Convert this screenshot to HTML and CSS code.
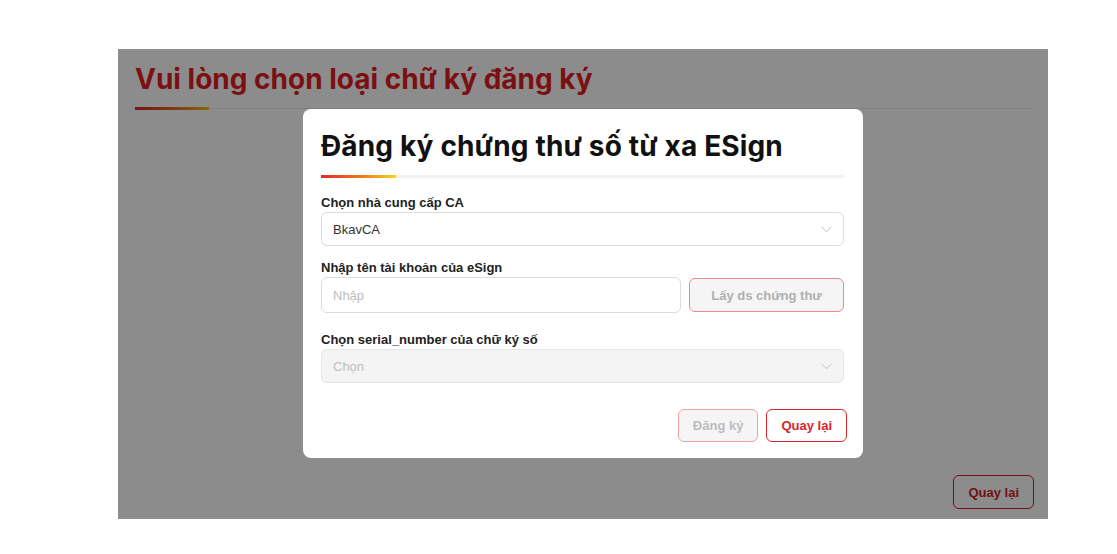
FILE: index.html
```html
<!DOCTYPE html>
<html lang="vi">
<head>
<meta charset="utf-8">
<link rel="stylesheet" href="styles.css">
</head>
<body>
<div class="frame">
  <div class="page">
    <h1 class="page-title">Vui lòng chọn loại chữ ký đăng ký</h1>
    <div class="rule rule-page"><span class="rule-accent"></span></div>
    <div class="page-body"></div>
    <div class="page-footer">
      <button class="btn btn-outline">Quay lại</button>
    </div>
  </div>
  <div class="overlay">
    <div class="modal">
      <h2 class="modal-title">Đăng ký chứng thư số từ xa ESign</h2>
      <div class="rule rule-modal"><span class="rule-accent rule-accent-bright"></span></div>

      <div class="field field-first">
        <label class="label">Chọn nhà cung cấp CA</label>
        <div class="select">
          <span class="select-value">BkavCA</span>
          <svg class="chevron" width="11" height="7" viewBox="0 0 11 7"><path d="M0.5 0.8 L5.5 5.8 L10.5 0.8" fill="none" stroke="#bfbfbf" stroke-width="1"/></svg>
        </div>
      </div>

      <div class="field">
        <label class="label">Nhập tên tài khoản của eSign</label>
        <div class="row">
          <div class="input"><span class="placeholder">Nhập</span></div>
          <button class="btn btn-disabled btn-wide">Lấy ds chứng thư</button>
        </div>
      </div>

      <div class="field field-last">
        <label class="label">Chọn serial_number của chữ ký số</label>
        <div class="select select-disabled">
          <span class="placeholder">Chọn</span>
          <svg class="chevron" width="11" height="7" viewBox="0 0 11 7"><path d="M0.5 0.8 L5.5 5.8 L10.5 0.8" fill="none" stroke="#bfbfbf" stroke-width="1"/></svg>
        </div>
      </div>

      <div class="modal-footer">
        <button class="btn btn-disabled">Đăng ký</button>
        <button class="btn btn-outline btn-bright">Quay lại</button>
      </div>
    </div>
  </div>
</div>
</body>
</html>
```

FILE: styles.css
```css
* { box-sizing: border-box; }

body {
  margin: 0;
  background: #ffffff;
  font-family: "Liberation Sans", Arial, sans-serif;
}

.frame {
  position: relative;
  margin: 49px 0 0 118px;
  width: 930px;
  height: 470px;
  background: #ffffff;
}

.page {
  height: 100%;
  display: flex;
  flex-direction: column;
  padding: 12px 16px 10px 17px;
}

.page-title {
  margin: 0;
  font-family: Inter, "Noto Sans", sans-serif;
  font-weight: 700;
  font-size: 28px;
  line-height: 36px;
  color: #e01e26;
}

.rule {
  height: 3px;
  display: flex;
}

.rule-page {
  margin-top: 10px;
  background: linear-gradient(#ffffff 0 1px, #ececec 1px 2px, #ffffff 2px);
}

.rule-accent {
  width: 74px;
  height: 3px;
  background: linear-gradient(90deg, #d9262b 0%, #e7641f 50%, #f2c511 100%);
}

.page-body { flex: 1; }

.page-footer {
  display: flex;
  justify-content: flex-end;
  margin-right: -2px;
}

.btn {
  height: 34px;
  min-width: 80px;
  padding: 0 14px;
  border-radius: 6px;
  font-family: "Liberation Sans", Arial, sans-serif;
  font-weight: 700;
  font-size: 13px;
  cursor: pointer;
}

.btn-outline {
  background: #ffffff;
  border: 1px solid #cc1f27;
  color: #cc1f27;
}

.btn-bright {
  border-color: #d9262b;
  color: #d9262b;
}

.btn-disabled {
  background: #f5f5f5;
  border: 1px solid #f0a3a5;
  color: #bdbdbd;
}

.overlay {
  position: absolute;
  inset: 0;
  background: rgba(0, 0, 0, 0.45);
  display: flex;
  align-items: center;
  justify-content: center;
}

.modal {
  width: 560px;
  background: #ffffff;
  border-radius: 8px;
  padding: 17px 16px 16px 18px;
  margin-bottom: 1px;
  display: flex;
  flex-direction: column;
}

.modal-title {
  margin: 0;
  font-family: Inter, "Noto Sans", sans-serif;
  font-weight: 700;
  font-size: 28px;
  line-height: 40px;
  color: #111111;
  letter-spacing: 0.15px;
}

.rule-modal {
  margin-top: 9px;
  margin-right: 3px;
  background: #f2f2f2;
}

.rule-accent-bright {
  width: 75px;
  background: linear-gradient(90deg, #e02a26 0%, #ef7a1f 55%, #fbd21a 100%);
}

.field {
  display: flex;
  flex-direction: column;
  margin-right: 3px;
  margin-top: 14px;
}

.field-first { margin-top: 17px; }

.field-last { margin-top: 19px; }

.label {
  font-weight: 700;
  font-size: 13px;
  line-height: 16px;
  color: #222222;
  margin-bottom: 1px;
}

.select,
.input {
  height: 34px;
  border: 1px solid #dcdcdc;
  border-radius: 6px;
  padding: 0 11px;
  display: flex;
  align-items: center;
  justify-content: space-between;
  font-size: 13px;
  color: #333333;
  background: #ffffff;
}

.select-disabled {
  background: #f4f4f4;
  border-color: #e6e6e6;
}

.placeholder { color: #bdbdbd; }

.row {
  display: flex;
  gap: 8px;
  align-items: center;
}

.input {
  flex: 1;
  height: 36px;
}

.btn-wide {
  width: 155px;
  height: 34px;
  color: #b0b0b0;
  border-color: #ee8a8d;
}

.modal-footer {
  margin-top: 26px;
  display: flex;
  justify-content: flex-end;
  gap: 8px;
}

.modal-footer .btn { height: 33px; }
```
